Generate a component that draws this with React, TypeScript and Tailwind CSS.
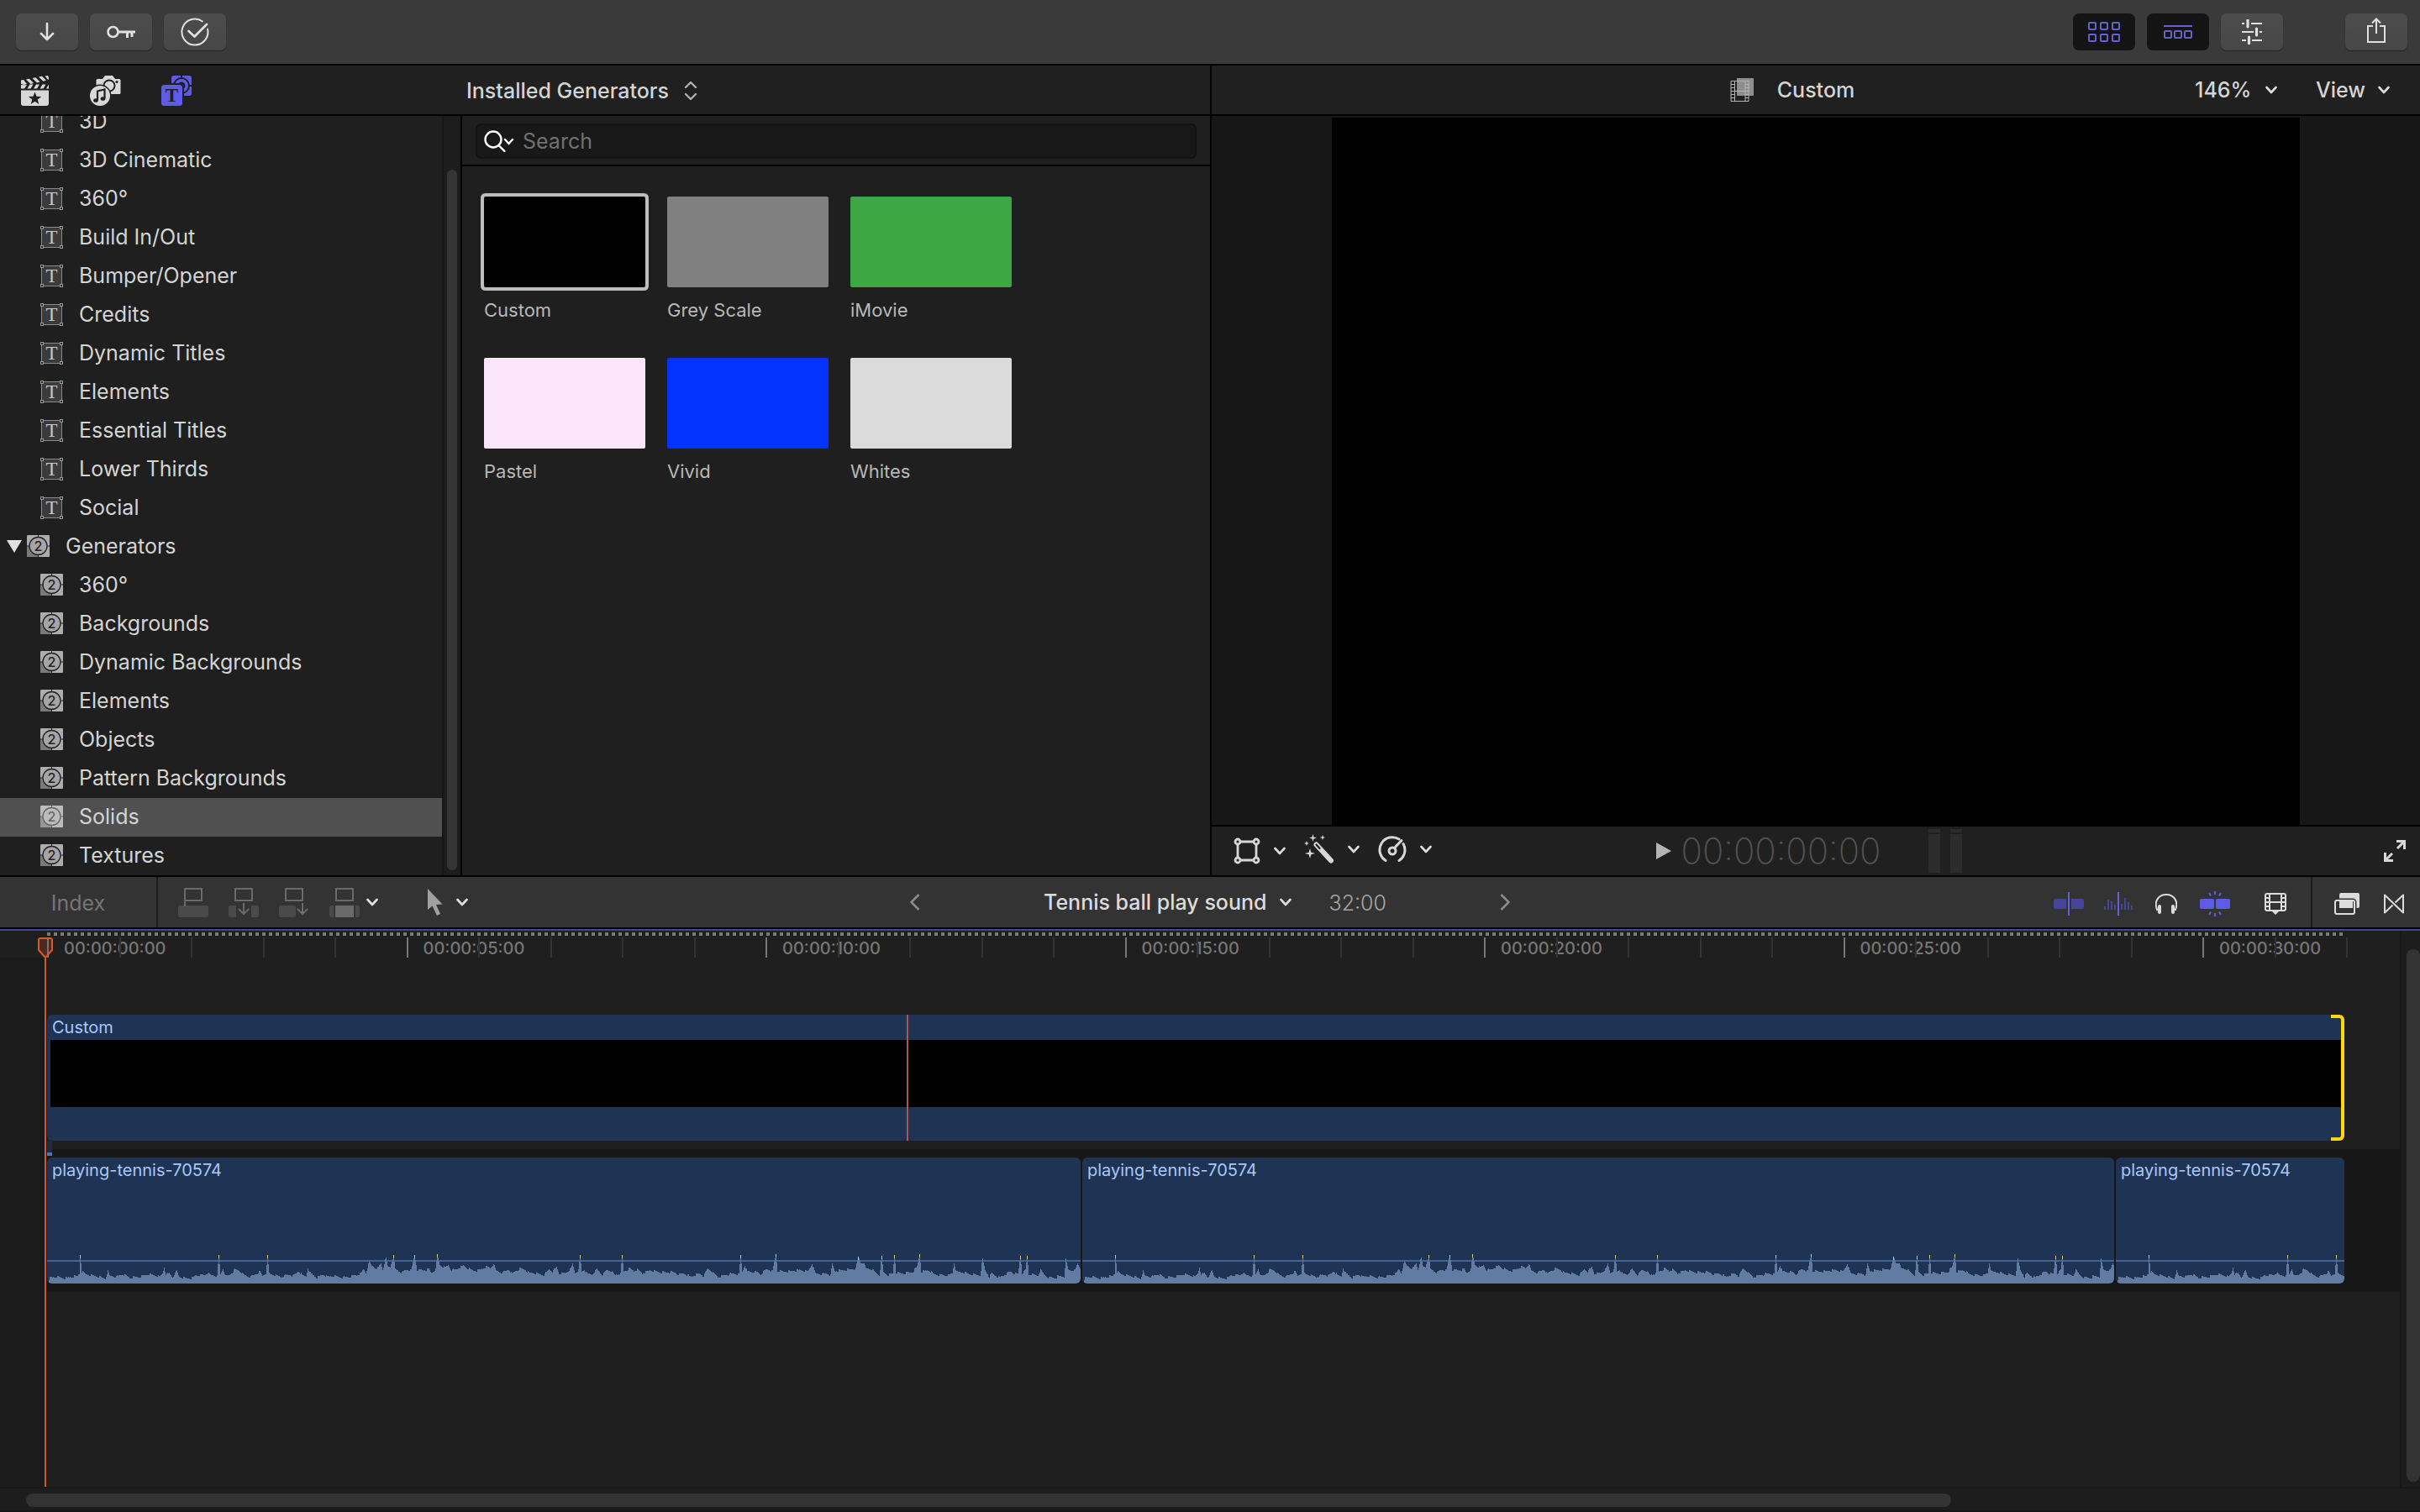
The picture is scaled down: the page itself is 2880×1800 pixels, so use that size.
import { useState } from "react"
import type { ReactNode } from "react"
import clsx from "clsx"

type Item = { id: string; label: string; kind: "title" | "generator" }

const titles = [
  "3D",
  "3D Cinematic",
  "360°",
  "Build In/Out",
  "Bumper/Opener",
  "Credits",
  "Dynamic Titles",
  "Elements",
  "Essential Titles",
  "Lower Thirds",
  "Social",
]

const generators = [
  "360°",
  "Backgrounds",
  "Dynamic Backgrounds",
  "Elements",
  "Objects",
  "Pattern Backgrounds",
  "Solids",
  "Textures",
]

const swatches = [
  { name: "Custom", color: "bg-black" },
  { name: "Grey Scale", color: "bg-[#808080]" },
  { name: "iMovie", color: "bg-[#3da744]" },
  { name: "Pastel", color: "bg-[#fce6f9]" },
  { name: "Vivid", color: "bg-[#0433ff]" },
  { name: "Whites", color: "bg-[#dbdbdb]" },
]

const SECONDS = 32

// [x, height] pairs of the audio envelope, in pixels
const envelope: [number, number][] = [
  [2, 3], [3, 7], [11, 8], [20, 6], [29, 8], [36, 9], [38, 12], [39, 34], [41, 14], [44, 12], [51, 10], [60, 8], [69, 6],
  [72, 15], [74, 9], [82, 8], [90, 11], [98, 7], [109, 8], [119, 11], [127, 10], [134, 8], [137, 12], [139, 20], [141, 11],
  [145, 12], [149, 8], [154, 15], [157, 8], [167, 6], [174, 7], [176, 10], [187, 10], [191, 13], [194, 10], [202, 9],
  [204, 34], [206, 11], [209, 18], [212, 9], [217, 10], [223, 17], [228, 16], [234, 10], [242, 8], [253, 14], [256, 9],
  [260, 12], [262, 34], [264, 12], [270, 10], [278, 8], [289, 11], [292, 9], [299, 15], [304, 9], [308, 9], [310, 19],
  [312, 13], [321, 7], [329, 11], [333, 8], [341, 9], [350, 7], [359, 8], [368, 10], [373, 12], [376, 17], [379, 13],
  [383, 26], [386, 21], [389, 20], [392, 17], [397, 24], [399, 17], [403, 31], [405, 20], [408, 20], [412, 34], [414, 17],
  [422, 13], [428, 17], [433, 16], [437, 34], [440, 16], [448, 16], [454, 17], [457, 13], [462, 17], [464, 35], [467, 22],
  [473, 19], [477, 22], [481, 16], [486, 17], [495, 21], [501, 18], [507, 15], [513, 16], [523, 20], [527, 18], [531, 24],
  [534, 15], [542, 13], [549, 17], [553, 12], [562, 18], [568, 17], [573, 13], [582, 12], [591, 10], [597, 17], [601, 14],
  [606, 20], [609, 12], [616, 12], [623, 18], [625, 23], [628, 13], [632, 16], [634, 34], [636, 14], [639, 17], [643, 11],
  [648, 11], [654, 17], [660, 10], [666, 16], [671, 15], [675, 10], [682, 12], [684, 34], [686, 14], [692, 18], [698, 15],
  [702, 17], [708, 12], [718, 16], [727, 14], [736, 13], [743, 14], [751, 11], [759, 12], [765, 8], [776, 12], [781, 9],
  [786, 18], [791, 14], [798, 8], [807, 10], [816, 12], [823, 11], [825, 34], [827, 14], [830, 22], [833, 14], [843, 14],
  [849, 11], [856, 17], [863, 15], [867, 35], [869, 15], [876, 14], [887, 15], [895, 16], [905, 14], [910, 24], [914, 12],
  [921, 11], [927, 12], [932, 10], [934, 23], [937, 15], [948, 16], [956, 17], [962, 18], [965, 32], [968, 25], [971, 25],
  [974, 18], [981, 17], [986, 13], [990, 10], [993, 33], [995, 13], [1001, 10], [1006, 12], [1008, 34], [1010, 13],
  [1019, 12], [1030, 14], [1035, 20], [1038, 35], [1040, 14], [1049, 16], [1055, 11], [1064, 10], [1073, 10], [1077, 12],
  [1079, 25], [1082, 14], [1090, 13], [1099, 11], [1110, 10], [1113, 30], [1116, 16], [1121, 8], [1124, 12], [1133, 7],
  [1146, 14], [1155, 11], [1158, 33], [1160, 12], [1164, 16], [1166, 33], [1168, 11], [1179, 10], [1182, 16], [1186, 11],
  [1191, 7], [1200, 7], [1203, 9], [1210, 8], [1212, 30], [1215, 16], [1223, 16], [1226, 24], [1230, 17],
]

function buildWave() {
  let d = "M2 40"
  let i = 0
  for (let x = 2; x < 1230; x++) {
    while (i < envelope.length - 2 && envelope[i + 1][0] <= x) i++
    const [x0, h0] = envelope[i]
    const [x1, h1] = envelope[i + 1]
    const t = (x - x0) / (x1 - x0)
    const noise = ((Math.floor(x / 2) * 7919) % 5) - 2
    const h = Math.round(h0 + (h1 - h0) * t + (h0 < 30 ? noise * 0.6 : 0))
    d += `V${40 - h}H${x + 1}`
  }
  return d + "V40Z"
}

const wavePath = buildWave()
const clipped = envelope.filter(([, h]) => h >= 32)

function Chevron({ className = "text-[#dcdcdc]" }: { className?: string }) {
  return (
    <svg width="14" height="10" viewBox="0 0 14 10" className={clsx("shrink-0", className)} aria-hidden="true">
      <path d="M1.5 2 7 8l5.500-6" fill="none" stroke="currentColor" strokeWidth="2.600" strokeLinecap="round" strokeLinejoin="round" />
    </svg>
  )
}

function TitleIcon() {
  return (
    <svg width="27" height="27" viewBox="0 0 27 27" className="shrink-0" aria-hidden="true">
      <rect x="1.500" y="1.500" width="24" height="24" fill="#3b3b3b" stroke="#8a8a8a" />
      {[0.5, 23.5].map((x) => [0.5, 23.5].map((y) => <rect key={`${x}-${y}`} x={x} y={y} width="3" height="3" fill="#222" stroke="#9a9a9a" />))}
      <text x="13.500" y="21" textAnchor="middle" fontSize="23" fill="#c8c8c8" fontFamily="Liberation Serif, serif">
        T
      </text>
    </svg>
  )
}

function GeneratorIcon({ active }: { active?: boolean }) {
  const line = active ? "#666" : "#222"
  return (
    <svg width="27" height="26" viewBox="0 0 27 26" className="shrink-0" aria-hidden="true">
      <rect width="27" height="26" rx="1" fill={active ? "#bcbcbc" : "#adadad"} />
      <path d="M0 13h13.500v13H1a1 1 0 0 1-1-1z" fill={active ? "#979797" : "#7a7a7a"} />
      <path d="M13.500 0v26M0 13h27" stroke={line} strokeWidth="1" />
      <circle cx="13.500" cy="13" r="10.500" fill={active ? "#bcbcbc" : "#a5a5a5"} stroke={line} strokeWidth="1.300" />
      <text x="13.500" y="18.500" textAnchor="middle" fontSize="16" fontWeight="500" fill={line} fontFamily="Inter, sans-serif">
        2
      </text>
    </svg>
  )
}

function ToolButton({ label, dark, children }: { label: string; dark?: boolean; children: ReactNode }) {
  return (
    <button
      type="button"
      aria-label={label}
      className={clsx(
        "flex h-[44px] w-[74px] items-center justify-center rounded-[7px]",
        dark ? "bg-[#141414] text-[#6562c8]" : "bg-linear-to-b from-[#4c4c4c] to-[#474747] text-[#e0e0e0] shadow-[0_1px_1px_#222]"
      )}
    >
      {children}
    </button>
  )
}

function IconButton({ label, className, children }: { label: string; className?: string; children: ReactNode }) {
  return (
    <button type="button" aria-label={label} className={clsx("flex shrink-0 items-center", className)}>
      {children}
    </button>
  )
}

function TopBar() {
  return (
    <header className="flex h-[78px] shrink-0 items-center justify-between border-b-2 border-black bg-[#3a3a3a] pr-[15px] pl-[19px]">
      <div className="flex gap-[14px]">
        <ToolButton label="Import">
          <svg width="18" height="24" viewBox="0 0 18 24" fill="none" stroke="currentColor" strokeWidth="2.600" strokeLinecap="round" strokeLinejoin="round">
            <path d="M9 2v19M2 14l7 7 7-7" />
          </svg>
        </ToolButton>
        <ToolButton label="Keywords">
          <svg width="34" height="18" viewBox="0 0 34 18" fill="none" stroke="currentColor" strokeWidth="2.600">
            <circle cx="7.500" cy="9" r="6" />
            <path d="M13.500 9H34M24.500 9v7M30 9v6" strokeWidth="3" />
          </svg>
        </ToolButton>
        <ToolButton label="Background tasks">
          <svg width="34" height="34" viewBox="0 0 34 34" fill="none" stroke="currentColor" strokeWidth="2" strokeLinecap="round">
            <path d="M26 4.500A15.500 15.500 0 1 0 32 13.500" />
            <path d="m9.500 16 7 6.500L31 8" strokeWidth="2.800" strokeLinejoin="round" />
          </svg>
        </ToolButton>
      </div>
      <div className="flex gap-[14px]">
        <ToolButton label="Show browser" dark>
          <svg width="38" height="26" viewBox="0 0 38 26" fill="none" stroke="currentColor" strokeWidth="2">
            {[1, 15, 29].map((x) => [2, 16].map((y) => <rect key={`${x}-${y}`} x={x} y={y} width="8" height="8" rx="1" />))}
          </svg>
        </ToolButton>
        <ToolButton label="Show timeline" dark>
          <svg width="34" height="16" viewBox="0 0 34 16" fill="none" stroke="currentColor" strokeWidth="2">
            <path d="M0 1h34" />
            {[1, 13, 25].map((x) => <rect key={x} x={x} y="7" width="8" height="8" rx="1" />)}
          </svg>
        </ToolButton>
        <ToolButton label="Show inspector">
          <svg width="26" height="30" viewBox="0 0 26 30" fill="none" stroke="currentColor" strokeWidth="2.200">
            <path d="M1 5h3M12 5h13M1 15h14M22 15h3M1 25h5M13 25h12" />
            <path d="M8 1v8M18.500 11v8M9.500 21v8" strokeWidth="3.200" strokeLinecap="round" />
          </svg>
        </ToolButton>
        <div className="ml-[60px]">
          <ToolButton label="Share">
            <svg width="24" height="36" viewBox="0 0 24 36" fill="none" stroke="currentColor" strokeWidth="2">
              <path d="M8 11H2v19h20V11h-6M12 20V3M7 7.500l5-5 5 5" />
            </svg>
          </ToolButton>
        </div>
      </div>
    </header>
  )
}

function LibraryTabs() {
  return (
    <div className="flex items-center gap-[48px]">
      <IconButton label="Libraries">
        <svg width="34" height="36" viewBox="0 0 34 36" fill="#d8d8d8">
          <path d="M0 5.500 3 5l4 5-3.500 1L0 10zM6 4.500l4-.8 5 5.300-3.500 1zM13.500 3l4-.8 5 5.300-3.500 1zM21 1.500l4-.7 5 5-3.500 1zM28.500.5 32 0l1 2.500-.5 3z" />
          <path d="M0 15.500V11l4 .2L7 11l-3 4.500zM7.500 15.500l3-5h4l-3 5zM15 15.500l3-5h4l-3 5zM22.500 15.500l3-5h4l-3 5zM30 15.500l3-5v5z" />
          <path
            fillRule="evenodd"
            d="M0 17.500h33V33a3 3 0 0 1-3 3H3a3 3 0 0 1-3-3zM16.500 19.500l-2 5.300-5.700.2 4.500 3.500-1.600 5.500 4.800-3.200 4.800 3.200-1.600-5.500 4.500-3.500-5.700-.2z"
          />
        </svg>
      </IconButton>
      <IconButton label="Photos and audio">
        <svg width="37" height="36" viewBox="0 0 37 36">
          <path d="M9 4h6l3-4h9l3 4h5a1.500 1.500 0 0 1 1.500 1.500v15A1.500 1.500 0 0 1 35 22H9a1.500 1.500 0 0 1-1.500-1.500v-15A1.500 1.500 0 0 1 9 4z" fill="#d8d8d8" />
          <circle cx="23" cy="12" r="6.500" fill="#d8d8d8" stroke="#202020" strokeWidth="2" />
          <circle cx="32" cy="7.500" r="1.600" fill="#202020" />
          <circle cx="12" cy="24" r="13.500" fill="#202020" />
          <circle cx="12" cy="24" r="12" fill="#d8d8d8" />
          <path d="M9 29.500V18.500l8.500-2v11" fill="none" stroke="#202020" strokeWidth="2.200" />
          <ellipse cx="7" cy="29.500" rx="2.800" ry="2.300" fill="#202020" />
          <ellipse cx="15.500" cy="27.500" rx="2.800" ry="2.300" fill="#202020" />
        </svg>
      </IconButton>
      <IconButton label="Titles and generators">
        <svg width="36" height="36" viewBox="0 0 36 36">
          <rect x="12" y="0" width="24" height="24" rx="3" fill="#5e5ce6" />
          <g fill="none" stroke="#202020" strokeWidth="2">
            <circle cx="24" cy="12" r="9" />
            <path d="M24 0v4M32 12h4" />
            <circle cx="24" cy="12" r="3.500" />
          </g>
          <rect x="-2" y="9" width="29" height="29" rx="4" fill="#202020" />
          <rect x="0" y="11" width="25" height="25" rx="3.500" fill="#5e5ce6" />
          <text x="12.500" y="31" textAnchor="middle" fontSize="23" fontWeight="700" fill="#202020" fontFamily="Liberation Serif, serif">
            T
          </text>
        </svg>
      </IconButton>
    </div>
  )
}

function Sidebar() {
  const [selected, setSelected] = useState("generator-Solids")
  const row = (item: Item) => {
    const active = selected === item.id
    return (
      <li key={item.id}>
        <button
          type="button"
          onClick={() => setSelected(item.id)}
          className={clsx("flex h-[46px] w-full items-center gap-[19px] pb-[2px] pl-12 text-left", active && "bg-[#505050]")}
        >
          {item.kind === "title" ? <TitleIcon /> : <GeneratorIcon active={active} />}
          <span>{item.label}</span>
        </button>
      </li>
    )
  }

  return (
    <nav className="flex w-[550px] shrink-0 border-r-2 border-black bg-[#1f1f1f]">
      <div className="flex min-w-0 flex-1 flex-col justify-end overflow-hidden">
        <ul>{titles.map((label) => row({ id: `title-${label}`, label, kind: "title" }))}</ul>
        <button type="button" aria-expanded="true" className="flex h-[46px] shrink-0 items-center pb-[2px] pl-2 text-left">
          <svg width="18" height="16" viewBox="0 0 18 16" className="mr-[6px]" aria-hidden="true">
            <path d="M0 1h18L9 16z" fill="#e0e0e0" />
          </svg>
          <GeneratorIcon />
          <span className="ml-[19px]">Generators</span>
        </button>
        <ul>{generators.map((label) => row({ id: `generator-${label}`, label, kind: "generator" }))}</ul>
      </div>
      <div className="flex w-[22px] flex-col border-l-2 border-[#171717] bg-[#1d1d1d] px-1 pt-16 pb-[6px]">
        <div className="w-3 flex-1 rounded-full bg-[#353535]" />
      </div>
    </nav>
  )
}

function Browser() {
  const [picked, setPicked] = useState("Custom")
  return (
    <section className="flex min-h-0 min-w-0 flex-col">
      <div className="flex h-[60px] shrink-0 items-center border-b-2 border-black bg-[#202020] pt-[2px] pl-[25px]">
        <LibraryTabs />
        <label className="ml-[327px] flex items-center gap-[18px] font-medium text-[#d4d4d4]">
          <select aria-label="Installed effects" className="appearance-none bg-transparent outline-none">
            <option>Installed Generators</option>
          </select>
          <svg width="16" height="24" viewBox="0 0 16 24" fill="none" stroke="#b0b0b0" strokeWidth="2.400" strokeLinecap="round" strokeLinejoin="round">
            <path d="m2 8 6-6 6 6M2 16l6 6 6-6" />
          </svg>
        </label>
      </div>
      <div className="flex min-h-0 flex-1">
        <Sidebar />
        <div className="flex min-w-0 flex-1 flex-col bg-[#1f1f1f]">
          <div className="flex h-[60px] shrink-0 items-center border-b-2 border-black px-4 pt-[2px]">
            <label className="flex h-[42px] flex-1 items-center gap-[10px] rounded-[6px] border-2 border-[#121212] bg-[#181818] px-2">
              <svg width="36" height="26" viewBox="0 0 36 26" fill="none" stroke="#fff" strokeWidth="2.400" strokeLinecap="round">
                <circle cx="11" cy="11" r="9.500" />
                <path d="m17.500 18 7 7M25 11l4.500 5 4.500-5" />
              </svg>
              <input type="search" aria-label="Search" placeholder="Search" className="min-w-0 flex-1 bg-transparent outline-none placeholder:text-[#707070]" />
            </label>
          </div>
          <div className="grid grid-cols-[repeat(auto-fill,192px)] gap-[26px] px-[26px] pt-9 pr-[200px]">
            {swatches.map((s) => (
              <button key={s.name} type="button" onClick={() => setPicked(s.name)} className="flex h-[166px] flex-col gap-3 text-left">
                <span className={clsx("h-[108px] w-full rounded-[2px]", s.color, picked === s.name && "ring-4 ring-[#bdbdbd]")} />
                <span className="text-[22px] leading-[30px] text-[#b8b8b8]">{s.name}</span>
              </button>
            ))}
          </div>
        </div>
      </div>
    </section>
  )
}

function Viewer() {
  return (
    <section className="flex min-h-0 min-w-0 flex-col border-l-2 border-black bg-[#171717]">
      <div className="grid h-[60px] shrink-0 grid-cols-[1fr_auto_1fr] items-center border-b-2 border-black bg-[#202020] font-medium text-[#d4d4d4]">
        <span />
        <div className="flex items-center gap-7 pr-14">
          <svg width="28" height="30" viewBox="0 0 28 30" aria-hidden="true">
            <rect x="8" y="1" width="20" height="21" fill="#8e8e8e" />
            <path d="M1 4.500h21v24H1zM5.500 4.500v24M18 4.500v24M5.500 16.500H18" fill="none" stroke="#b5b5b5" />
            <path d="M1 8.500h4.500M1 12.500h4.500M1 16.500h4.500M1 20.500h4.500M1 24.500h4.500M18 8.500h4M18 12.500h4M18 16.500h4M18 20.500h4M18 24.500h4" stroke="#b5b5b5" />
          </svg>
          <h1>Custom</h1>
        </div>
        <div className="flex items-center justify-end gap-[46px] pr-9">
          <label className="flex items-center gap-4">
            <select aria-label="Zoom level" className="appearance-none bg-transparent outline-none">
              <option>146%</option>
            </select>
            <Chevron />
          </label>
          <label className="flex items-center gap-[14px]">
            <select aria-label="View options" className="appearance-none bg-transparent outline-none">
              <option>View</option>
            </select>
            <Chevron />
          </label>
        </div>
      </div>
      <div className="flex min-h-0 flex-1 px-[143px] pt-[2px]">
        <div className="flex-1 bg-black" />
      </div>
      <div className="grid h-[60px] shrink-0 grid-cols-[1fr_auto_1fr] items-center border-t-2 border-black bg-[#202020] text-[#d8d8d8]">
        <div className="flex items-center gap-[22px] pl-[26px]">
          <IconButton label="Transform" className="gap-4">
            <svg width="32" height="32" viewBox="0 0 32 32" fill="none" stroke="currentColor" strokeWidth="2.800">
              <path d="M8 5h16M8 27h16M5 8v16M27 8v16" />
              {[5, 27].map((x) => [5, 27].map((y) => <circle key={`${x}-${y}`} cx={x} cy={y} r="3" />))}
            </svg>
            <Chevron />
          </IconButton>
          <IconButton label="Enhancements" className="gap-4 pb-1">
            <svg width="36" height="36" viewBox="0 0 36 36" fill="currentColor">
              <path d="m10.500 0 1 3.500 3.500 1-3.500 1-1 3.500-1-3.500-3.500-1 3.500-1zM22 1l.8 2.200L25 4l-2.200.8L22 7l-.8-2.200L19 4l2.200-.8zM3 8l.8 2.200L6 11l-2.200.8L3 14l-.8-2.200L0 11l2.200-.8zM7 17l1.300 4.700L13 23l-4.700 1.300L7 29l-1.300-4.700L1 23l4.700-1.300z" />
              <path d="m14.500 12.500 17.500 19" stroke="currentColor" strokeWidth="6" strokeLinecap="round" />
              <path d="m14.500 12.500 4 4.500" stroke="#202020" strokeWidth="2.200" strokeLinecap="round" />
            </svg>
            <Chevron />
          </IconButton>
          <IconButton label="Retiming" className="gap-4 pb-1">
            <svg width="34" height="32" viewBox="0 0 34 32" fill="none" stroke="currentColor" strokeWidth="3" strokeLinecap="round">
              <path d="M9 29.500A15 15 0 0 1 25 4M30 9.500a15 15 0 0 1-5 20" />
              <circle cx="17" cy="18" r="4" />
              <path d="M19.500 14.500 28 5.500" />
            </svg>
            <Chevron />
          </IconButton>
        </div>
        <div className="flex items-center pr-4">
          <IconButton label="Play">
            <svg width="18" height="20" viewBox="0 0 18 20">
              <path d="M0 0v20l18-10z" fill="#b4b4b4" />
            </svg>
          </IconButton>
          <span className="ml-3 text-[42px] leading-none font-extralight text-[#525252]">00:00:00:00</span>
          <div className="ml-[57px] flex gap-3" aria-hidden="true">
            {[0, 1].map((n) => (
              <div key={n} className="flex w-[14px] flex-col gap-[2px]">
                <span className="h-1 bg-[#2c2c2c]" />
                <span className="h-[46px] bg-[#2c2c2c]" />
              </div>
            ))}
          </div>
        </div>
        <div className="flex justify-end pr-4">
          <IconButton label="Full screen">
            <svg width="28" height="28" viewBox="0 0 28 28" fill="none" stroke="currentColor" strokeWidth="3">
              <path d="M16 2.500h9.500V12M25 3l-8 8M12 25.500H2.500V16M3 25l8-8" />
            </svg>
          </IconButton>
        </div>
      </div>
    </section>
  )
}

function EditIcons() {
  return (
    <div className="flex items-center gap-6 pl-6 text-[#6a6a6a]">
      <IconButton label="Connect">
        <svg width="36" height="36" viewBox="0 0 36 36" fill="none" stroke="currentColor" strokeWidth="2">
          <rect y="22" width="36" height="14" rx="2" fill="#4a4a4a" stroke="none" />
          <path d="M8 23V2h20v14H8" />
        </svg>
      </IconButton>
      <IconButton label="Insert">
        <svg width="36" height="36" viewBox="0 0 36 36" fill="none" stroke="currentColor" strokeWidth="2">
          <path d="M0 24a2 2 0 0 1 2-2h7v14H2a2 2 0 0 1-2-2zM27 22h7a2 2 0 0 1 2 2v10a2 2 0 0 1-2 2h-7z" fill="#4a4a4a" stroke="none" />
          <path d="M8 2h20v14H8zM18 19v13M12 26l6 6 6-6" />
        </svg>
      </IconButton>
      <IconButton label="Append">
        <svg width="36" height="36" viewBox="0 0 36 36" fill="none" stroke="currentColor" strokeWidth="2">
          <rect y="22" width="20" height="14" rx="2" fill="#4a4a4a" stroke="none" />
          <path d="M8 2h20v14H8zM28 19v13M22 26l6 6 6-6" />
        </svg>
      </IconButton>
      <IconButton label="Overwrite" className="gap-2">
        <svg width="36" height="36" viewBox="0 0 36 36" fill="none" stroke="currentColor" strokeWidth="2">
          <path d="M0 24a2 2 0 0 1 2-2h3v14H2a2 2 0 0 1-2-2zM31 22h3a2 2 0 0 1 2 2v10a2 2 0 0 1-2 2h-3z" fill="#4a4a4a" stroke="none" />
          <rect x="7" y="22" width="22" height="14" fill="currentColor" stroke="none" />
          <path d="M8 2h20v14H8z" />
        </svg>
        <Chevron className="text-[#e0e0e0]" />
      </IconButton>
      <IconButton label="Select tool" className="ml-[35px] gap-4">
        <svg width="18" height="32" viewBox="0 0 18 32">
          <path d="M0 0v25l5.500-4.500L11 32l4-2-5-11 7.500-.5z" fill="#a0a0a0" />
        </svg>
        <Chevron className="text-[#e0e0e0]" />
      </IconButton>
    </div>
  )
}

function TimelineBar() {
  return (
    <div className="grid h-[62px] shrink-0 grid-cols-[1fr_714px_1fr] items-stretch border-b-2 border-black bg-[#333]">
      <div className="flex">
        <button type="button" className="w-[188px] border-r-2 border-[#1c1c1c] pt-[2px] text-[#757575]">
          Index
        </button>
        <EditIcons />
      </div>
      <div className="flex items-center justify-between">
        <IconButton label="Back">
          <svg width="12" height="20" viewBox="0 0 12 20" fill="none" stroke="#8c8c8c" strokeWidth="2.600">
            <path d="m10.500 1-9 9 9 9" />
          </svg>
        </IconButton>
        <div className="flex items-center pl-3">
          <button type="button" className="flex items-center gap-4 font-medium text-[#dcdcdc]">
            Tennis ball play sound
            <Chevron />
          </button>
          <span className="ml-11 pt-[2px] font-light text-[#a5a5a5]">32:00</span>
        </div>
        <IconButton label="Forward">
          <svg width="12" height="20" viewBox="0 0 12 20" fill="none" stroke="#8c8c8c" strokeWidth="2.600">
            <path d="m1.500 1 9 9-9 9" />
          </svg>
        </IconButton>
      </div>
      <div className="flex justify-end">
        <div className="flex items-center pt-1 pr-[29px]">
          <IconButton label="Skimming">
            <svg width="36" height="28" viewBox="0 0 36 28">
              <path d="M2 8h13v12H2a2 2 0 0 1-2-2v-8a2 2 0 0 1 2-2zM21 8h13a2 2 0 0 1 2 2v8a2 2 0 0 1-2 2H21z" fill="#47459a" />
              <path d="M18 0v28" stroke="#6361d8" strokeWidth="2" />
            </svg>
          </IconButton>
          <IconButton label="Audio skimming" className="ml-6">
            <svg width="34" height="28" viewBox="0 0 34 28">
              <path d="M1 21v-4M5 21V9M9 21V11M13 21v-6M21 21v-7M25 21V7M29 21v-9M33 21v-5" stroke="#47459a" strokeWidth="2" />
              <path d="M17 0v28" stroke="#6361d8" strokeWidth="2" />
            </svg>
          </IconButton>
          <IconButton label="Solo" className="ml-[27px]">
            <svg width="26" height="24" viewBox="0 0 26 24">
              <path d="M2.500 20C-2.500 9 4 1 13 1s15.500 8 10.500 19" fill="none" stroke="#dcdcdc" strokeWidth="2" />
              <rect x="3" y="13" width="4" height="11" rx="2" fill="#dcdcdc" />
              <rect x="19" y="13" width="4" height="11" rx="2" fill="#dcdcdc" />
            </svg>
          </IconButton>
          <IconButton label="Snapping" className="ml-[27px]">
            <svg width="36" height="30" viewBox="0 0 36 30">
              <path d="M2 9h13a2 2 0 0 1 2 2v8a2 2 0 0 1-2 2H2a2 2 0 0 1-2-2v-8a2 2 0 0 1 2-2zM21 9h13a2 2 0 0 1 2 2v8a2 2 0 0 1-2 2H21a2 2 0 0 1-2-2v-8a2 2 0 0 1 2-2z" fill="#5e5ce6" />
              <path d="M18 0v4M18 26v4M11 2l2 3.500M25 2l-2 3.500M11 28l2-3.500M25 28l-2-3.500" stroke="#5e5ce6" strokeWidth="2" />
            </svg>
          </IconButton>
          <IconButton label="Clip appearance" className="ml-[41px]">
            <svg width="26" height="26" viewBox="0 0 26 26" fill="none" stroke="#dcdcdc" strokeWidth="2">
              <rect x="1" y="1" width="24" height="20" rx="2" />
              <path d="M6 1v20M20 1v20M6 11h14M1 6h5M1 11h5M1 16h5M20 6h5M20 11h5M20 16h5" />
              <path d="M8.500 21.500h9L13 26z" fill="#dcdcdc" stroke="none" />
            </svg>
          </IconButton>
        </div>
        <div className="flex items-center gap-[29px] border-l-2 border-[#1c1c1c] pt-1 pr-[19px] pl-[26px]">
          <IconButton label="Effects">
            <svg width="30" height="26" viewBox="0 0 30 26">
              <rect x="6" y="0" width="24" height="18" rx="2" fill="#dcdcdc" />
              <rect x="1" y="9" width="23" height="16" rx="2" fill="none" stroke="#333" strokeWidth="5" />
              <rect x="6" y="10" width="16" height="8" fill="#dcdcdc" />
              <rect x="1" y="9" width="23" height="16" rx="2" fill="none" stroke="#dcdcdc" strokeWidth="2" />
            </svg>
          </IconButton>
          <IconButton label="Transitions">
            <svg width="24" height="24" viewBox="0 0 24 24" fill="none" stroke="#dcdcdc" strokeWidth="2" strokeLinejoin="round">
              <path d="m10.500 13.500-9.500 9V1.500l22 21v-21l-9.500 9" />
            </svg>
          </IconButton>
        </div>
      </div>
    </div>
  )
}

function Ruler() {
  return (
    <div className="pt-[2px] pr-[62px]">
      <div className="mr-[5px] h-1 bg-[repeating-linear-gradient(90deg,#7a7a7a_0_4px,transparent_4px_8px)]" />
      <div className="mt-[2px] flex h-6">
        {Array.from({ length: SECONDS }, (_, n) => (
          <div
            key={n}
            className={clsx(
              "w-0 flex-1 border-l-2 pl-[18px] text-[20px] leading-[27px] font-medium whitespace-nowrap text-[#777]",
              n % 5 === 0 ? "border-[#777]" : "border-[#333]",
              n === SECONDS - 1 && "border-r-2"
            )}
          >
            {n % 5 === 0 && `00:00:${String(n).padStart(2, "0")}:00`}
          </div>
        ))}
      </div>
    </div>
  )
}

function AudioClip({ name, className }: { name: string; className: string }) {
  return (
    <div className={clsx("relative h-[150px] w-0 overflow-hidden rounded-[6px] bg-[#1f3454]", className)}>
      <div className="flex h-full flex-col justify-between">
        <span className="pl-[6px] text-[20px] leading-[30px] whitespace-nowrap text-[#a9c8f8]">{name}</span>
        <svg width="1230" height="40" viewBox="0 0 1230 40" className="shrink-0" aria-hidden="true">
          <path d={wavePath} fill="#617ba3" />
          {clipped.map(([x, h]) => (
            <rect key={x} x={x} y={40 - h} width="1" height="4" fill="#d2cc62" />
          ))}
          <rect y="12" width="1230" height="2" fill="#5b7bb0" fillOpacity="0.65" />
        </svg>
      </div>
    </div>
  )
}

function Timeline() {
  return (
    <section className="flex h-[756px] shrink-0 flex-col bg-[#1f1f1f]">
      <TimelineBar />
      <div className="flex min-h-0 flex-1 border-t-2 border-[#45429a]">
        <div className="relative flex w-14 flex-col pt-8">
          <div className="flex-1 bg-[#1b1b1b]" />
          {/* playhead */}
          <div className="absolute top-2 right-[-8px] bottom-0 z-10 flex w-[20px] flex-col items-center">
            <svg width="20" height="25" viewBox="0 0 20 25" className="shrink-0" aria-hidden="true">
              <path d="M2 3a2 2 0 0 1 2-2h12a2 2 0 0 1 2 2v12l-8 9-8-9z" fill="#c0502a" fillOpacity="0.25" stroke="#d9592a" strokeWidth="2" />
            </svg>
            <div className="w-[2px] flex-1 bg-[#d0592e]" />
          </div>
        </div>
        <div className="flex min-w-0 flex-1 flex-col">
          <Ruler />
          <div className="mt-[68px] mr-[66px]">
            <div className="relative flex h-[150px] flex-col rounded-[6px] bg-[#1f3454] pr-1 pl-1">
              <span className="pl-[2px] text-[20px] leading-[30px] text-[#a9c8f8]">Custom</span>
              <div className="h-20 bg-black" />
              <div className="absolute inset-y-0 left-[37.4%] w-[2px] bg-[#a8584f]" />
              <div className="absolute inset-y-0 right-0 w-4 rounded-r-[6px] border-4 border-l-0 border-[#ffd60a]" />
            </div>
          </div>
          <div className="h-[10px] w-[6px] bg-[#1f2b42]" />
          <div className="relative flex gap-[2px] bg-[#171717] py-[10px] pr-[66px]">
            <div className="absolute top-0 left-0 h-2 w-[6px] border-b-4 border-[#3f78c4] bg-[#1f2b42]" />
            <AudioClip name="playing-tennis-70574" className="grow-[1230]" />
            <AudioClip name="playing-tennis-70574" className="grow-[1228]" />
            <AudioClip name="playing-tennis-70574" className="grow-[272]" />
          </div>
        </div>
        <div className="flex w-6 flex-col border-l-2 border-[#171717] bg-[#1d1d1d] pt-[22px] pb-[6px] pl-[6px]">
          <div className="flex-1 rounded-full bg-[#333]" />
        </div>
      </div>
      <div className="h-[30px] border-y-2 border-[#171717] bg-[#1d1d1d] pt-[6px] pl-[31px]">
        <div className="h-4 w-[80.4%] rounded-full bg-[#333]" />
      </div>
    </section>
  )
}

export default function App() {
  return (
    <div className="flex h-screen flex-col overflow-hidden bg-black font-['Inter',sans-serif] text-[25px] leading-8 text-[#d4d4d4]">
      <TopBar />
      <main className="grid min-h-0 flex-1 grid-cols-2 border-b-2 border-black">
        <Browser />
        <Viewer />
      </main>
      <Timeline />
    </div>
  )
}
